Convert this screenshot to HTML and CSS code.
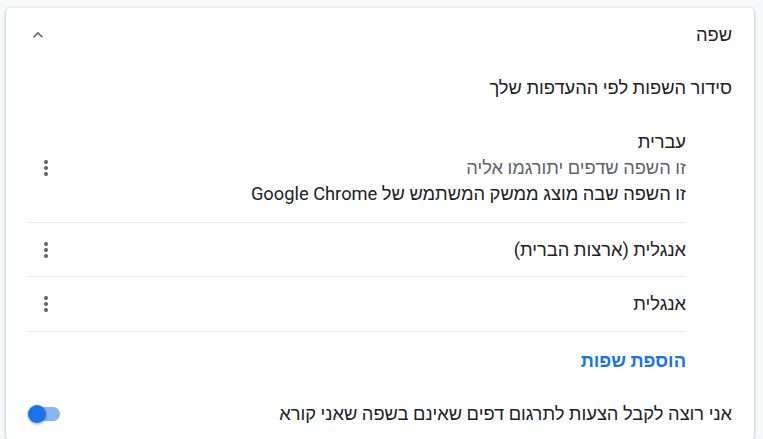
FILE: index.html
```html
<!DOCTYPE html>
<html lang="he" dir="rtl">
<head>
<meta charset="UTF-8">
<meta name="viewport" content="width=device-width, initial-scale=1.0">
<title>שפה</title>
<link rel="stylesheet" href="styles.css">
</head>
<body>
  <div class="card">
    <div class="section-header">
      <span class="section-title">שפה</span>
      <span class="expand-btn">
        <svg width="20" height="20" viewBox="0 0 24 24"><path d="M7.41 15.41L12 10.83l4.59 4.58L18 14l-6-6-6 6z" fill="#5f6368"/></svg>
      </span>
    </div>

    <div class="row subheading">סידור השפות לפי ההעדפות שלך</div>

    <div class="lang-list">
      <div class="lang-item tall">
        <div class="lang-text">
          <div>עברית</div>
          <div class="secondary">זו השפה שדפים יתורגמו אליה</div>
          <div>זו השפה שבה מוצג ממשק המשתמש של Google Chrome</div>
        </div>
        <span class="more-btn"><i></i><i></i><i></i></span>
      </div>

      <div class="lang-item">
        <div class="lang-text">אנגלית (ארצות הברית)</div>
        <span class="more-btn"><i></i><i></i><i></i></span>
      </div>

      <div class="lang-item last">
        <div class="lang-text">אנגלית</div>
        <span class="more-btn"><i></i><i></i><i></i></span>
      </div>
    </div> <!-- End of .lang-list -->

    <div class="add-row">
      <a class="add-link" href="#">הוספת שפות</a>
    </div>

    <div class="row toggle-row">
      <span>אני רוצה לקבל הצעות לתרגום דפים שאינם בשפה שאני קורא</span>
      <span class="toggle checked"><span class="knob"></span></span>
    </div>
  </div> <!-- End of .card -->
</body>
</html>
```

FILE: styles.css
```css
body {
  background-color: #f8f9fa;
  color: #202124;
  font-family: Roboto, "Liberation Sans", sans-serif;
  font-size: 18.3px;
  margin: 0;
  padding: 8px 9px 0 6px; /* card sits a little off the edges */
}

.card {
  background-color: #fff;
  border-radius: 4px;
  box-shadow: 0 1px 2px 0 rgba(60, 64, 67, 0.3), 0 1px 3px 1px rgba(60, 64, 67, 0.15);
  padding: 0 22px;
}

.section-header {
  display: flex;
  align-items: center;
  justify-content: space-between;
  height: 54px;
}

.expand-btn {
  display: flex;
  align-items: center;
  justify-content: center;
  width: 20px;
  height: 20px;
}

.row {
  display: flex;
  align-items: center;
  justify-content: space-between;
}

.subheading {
  height: 52px;
}

.lang-list {
  margin-right: 46px; /* indent the list under the heading */
}

.lang-item {
  display: flex;
  align-items: center;
  justify-content: space-between;
  min-height: 53px;
  border-bottom: 1px solid #e8eaed;
}

.lang-item.tall {
  min-height: 108px;
  line-height: 26px;
}

.lang-item.last {
  min-height: 54px;
}

.secondary {
  color: #5f6368;
}

.more-btn {
  display: flex;
  flex-direction: column;
  align-items: center;
  gap: 2px;
  width: 36px;
}

.more-btn i {
  width: 4px;
  height: 4px;
  border-radius: 50%;
  background-color: #5f6368;
}

.add-row {
  display: flex;
  align-items: center;
  height: 55px;
  padding-top: 1px;
  margin-right: 46px;
}

.add-link {
  color: #1a73e8;
  font-weight: bold;
  text-decoration: none;
}

.toggle-row {
  height: 52px;
}

.toggle {
  position: relative;
  display: inline-block;
  width: 30px;
  height: 14px;
  border-radius: 7px;
  background-color: #8ab4f8;
  margin-left: 2px;
}

.toggle .knob {
  position: absolute;
  top: -2px;
  left: -2px;
  width: 18px;
  height: 18px;
  border-radius: 50%;
  background-color: #1a73e8;
  box-shadow: 0 1px 3px rgba(0, 0, 0, 0.4);
}
```
